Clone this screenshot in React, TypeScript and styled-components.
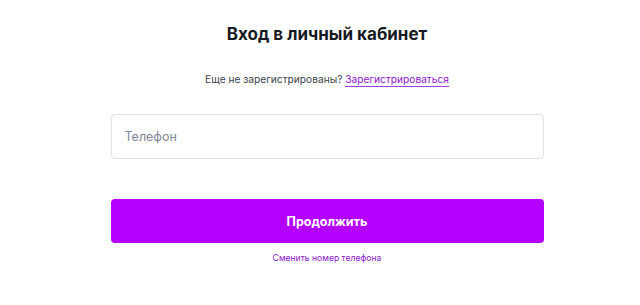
import styled, { createGlobalStyle } from "styled-components";

const GlobalStyle = createGlobalStyle`
  html, body {
    margin: 0;
    padding: 0;
    background: #ffffff;
  }
  body {
    font-family: Inter, "Noto Sans", "Liberation Sans", sans-serif;
    color: #1c1f26;
  }
`;

const Page = styled.main`
  display: flex;
  justify-content: center;
  padding: 22px 0 0 14px;
`;

const Form = styled.form`
  width: 433px;
  display: flex;
  flex-direction: column;
  align-items: center;
`;

const Title = styled.h1`
  margin: 0;
  font-size: 17px;
  font-weight: 700;
  line-height: 24px;
  color: #161a22;
`;

const Hint = styled.p`
  margin: 26px 0 0;
  font-size: 10.2px;
  line-height: 14px;
  color: #3a3f4a;
`;

const Link = styled.a<{ $small?: boolean }>`
  color: #8b16c9;
  text-decoration: none;
  border-bottom: 1px solid #a43fe0;
  padding-bottom: 1px;
  font-size: ${(p) => (p.$small ? "8.6px" : "inherit")};
  cursor: pointer;
`;

const Input = styled.input`
  box-sizing: border-box;
  margin-top: 28px;
  width: 100%;
  height: 45px;
  padding: 0 13px;
  border: 1px solid #dfe1ea;
  border-radius: 4px;
  font-family: inherit;
  font-size: 12.5px;
  color: #1c1f26;
  outline: none;
  &::placeholder {
    color: #7f8696;
  }
`;

const Button = styled.button`
  margin-top: 40px;
  width: 100%;
  height: 44px;
  border: none;
  border-radius: 4px;
  background: #b300ff;
  color: #ffffff;
  font-family: inherit;
  font-size: 12.5px;
  font-weight: 700;
  cursor: pointer;
`;

const Footer = styled.div`
  margin-top: 6px;
  line-height: 12px;
`;

export default function App() {
  return (
    <>
      <GlobalStyle />
      <Page>
        <Form onSubmit={(e) => e.preventDefault()}>
          <Title>Вход в личный кабинет</Title>
          <Hint>
            Еще не зарегистрированы? <Link>Зарегистрироваться</Link>
          </Hint>
          <Input type="tel" placeholder="Телефон" />
          <Button type="submit">Продолжить</Button>
          <Footer>
            <Link $small>Сменить номер телефона</Link>
          </Footer>
        </Form>
      </Page>
    </>
  );
}
